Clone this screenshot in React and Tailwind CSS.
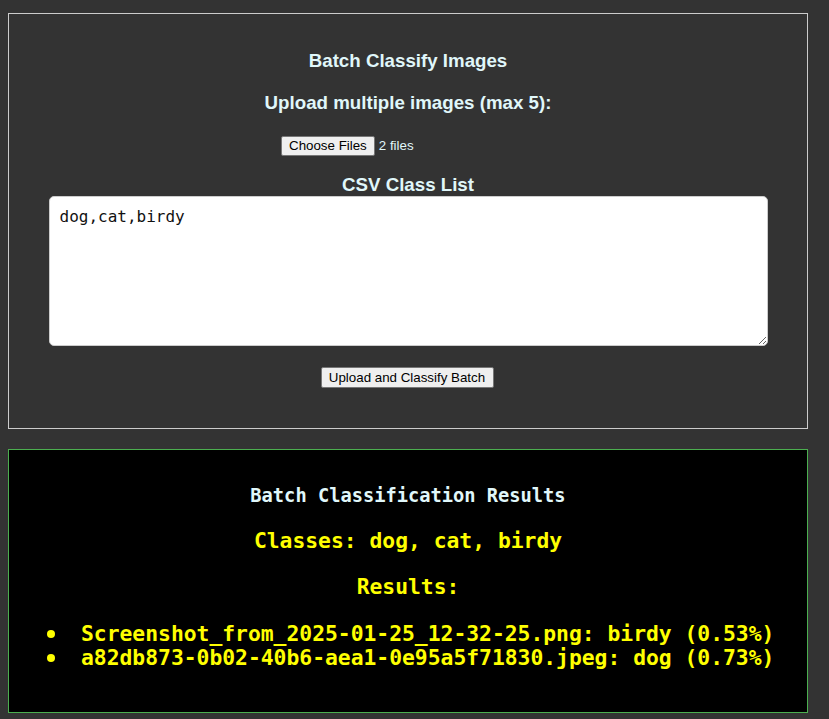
export default function App() {
  return (
    <div className="min-h-[719px] bg-[#333333] px-[8px] pt-[13px] pb-[8px]" style={{ fontFamily: '"Liberation Sans", Arial, sans-serif' }}>
      <div className="w-[800px] border border-[#cccccc] bg-[#333333] flex flex-col items-center pt-[36px] pb-[40px]">
        <h3 className="text-[18.72px] leading-[22px] font-bold text-[#e0f7fa]">Batch Classify Images</h3>
        <div className="mt-[20px] text-[18.72px] leading-[22px] font-bold text-[#e0f7fa]">Upload multiple images (max 5):</div>
        <div className="mt-[22px] w-[254px] h-[20px] flex items-center">
          <button className="h-[20px] px-[7px] text-[13.33px] leading-[16px] text-black bg-[#efefef] border border-[#767676] rounded-[2px]">Choose Files</button>
          <span className="ml-[4px] text-[13.33px] text-[#e0f7fa]">2 files</span>
        </div>
        <div className="mt-[18px] text-[18.72px] leading-[22px] font-bold text-[#e0f7fa]">CSV Class List</div>
        <textarea
          className="w-[719px] h-[150px] bg-white text-[#111111] border border-[#cccccc] rounded-[5px] p-[10px] text-[16px] leading-[19px] outline-none"
          style={{ fontFamily: '"DejaVu Sans Mono", monospace' }}
          defaultValue="dog,cat,birdy"
        />
        <button className="mt-[21px] ml-[-2px] h-[21px] w-[173px] text-[13.33px] leading-[16px] text-black bg-[#efefef] border border-[#767676] rounded-[2px]">Upload and Classify Batch</button>
      </div>

      <div
        className="mt-[20px] w-[800px] border border-[#4caf50] bg-black flex flex-col items-center pt-[35px] pb-[42px] font-bold"
        style={{ fontFamily: '"DejaVu Sans Mono", monospace' }}
      >
        <h3 className="text-[18.72px] leading-[22px] text-[#e0f7fa]">Batch Classification Results</h3>
        <div className="mt-[22px] text-[21.33px] leading-[24px] text-[#ffff00]">Classes: dog, cat, birdy</div>
        <div className="mt-[22px] text-[21.33px] leading-[24px] text-[#ffff00]">Results:</div>
        <ul className="mt-[23px] self-stretch pl-[38px] text-[21.33px] leading-[24px] text-[#ffff00]">
          <li className="flex items-center">
            <span className="w-[8px] h-[8px] rounded-full bg-[#ffff00]"></span>
            <span className="ml-[26px]">Screenshot_from_2025-01-25_12-32-25.png: birdy (0.53%)</span>
          </li>
          <li className="flex items-center">
            <span className="w-[8px] h-[8px] rounded-full bg-[#ffff00]"></span>
            <span className="ml-[26px]">a82db873-0b02-40b6-aea1-0e95a5f71830.jpeg: dog (0.73%)</span>
          </li>
        </ul>
      </div>
    </div>
  );
}
